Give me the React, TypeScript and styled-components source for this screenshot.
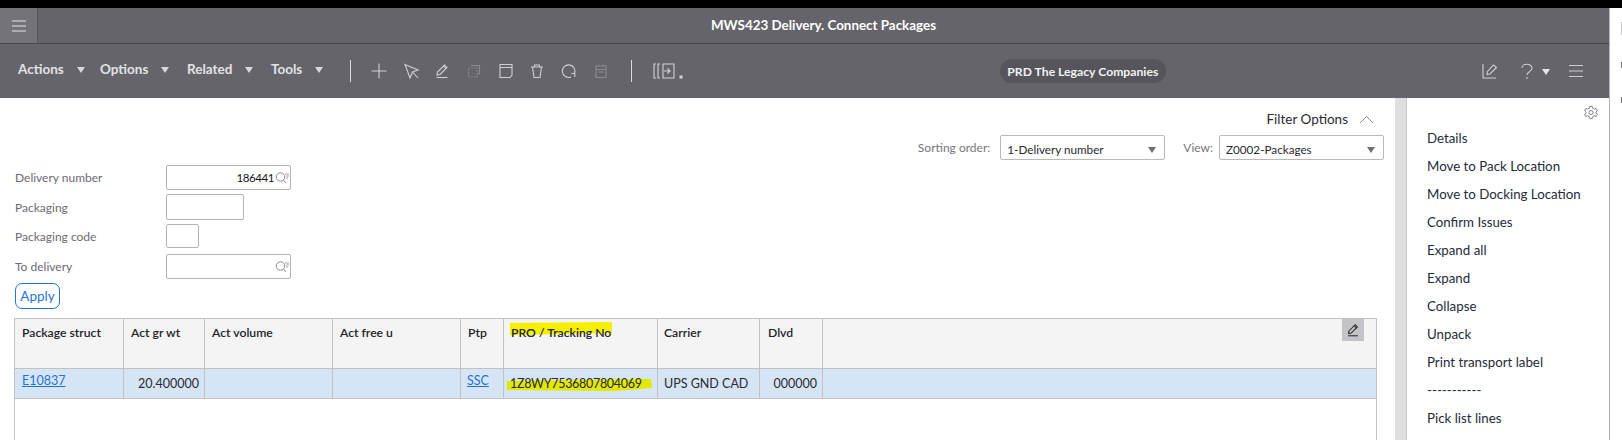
import React from "react";
import styled, { createGlobalStyle } from "styled-components";

const FONT = `Lato, "Noto Sans", "Liberation Sans", sans-serif`;

const GRID = "109px 81px 128px 128px 43px 154px 102px 63px 1fr";

const GlobalStyle = createGlobalStyle`
  html, body {
    margin: 0;
    padding: 0;
    background: #fff;
  }
  body {
    font-family: ${FONT};
    font-size: 13px;
    color: #2a2a30;
  }
`;

const Page = styled.div`
  width: 1622px;
  height: 440px;
  overflow: hidden;
  display: flex;
  flex-direction: column;
`;

const BlackEdge = styled.div`
  height: 8px;
  flex: none;
  background: #000;
`;

const Frame = styled.div`
  flex: 1;
  min-height: 0;
  display: flex;
`;

const Shell = styled.div`
  width: 1609px;
  flex: none;
  display: flex;
  flex-direction: column;
  border-right: 1px solid #b4b4b8;
`;

const NextWindow = styled.div`
  flex: 1;
  display: flex;
  flex-direction: column;
  align-items: flex-end;
`;

const NextWindowMark = styled.span<{ $top: number; $height: number; $color: string }>`
  width: 1px;
  height: ${p => p.$height}px;
  margin-top: ${p => p.$top}px;
  background: ${p => p.$color};
`;

const TitleBar = styled.header`
  height: 35px;
  flex: none;
  display: flex;
  align-items: stretch;
  background: #65646b;
  border-bottom: 1px solid #47474c;
`;

const MenuButton = styled.div`
  width: 37px;
  flex: none;
  display: flex;
  align-items: center;
  justify-content: center;
  background: #74737a;
  border-right: 1px solid #55555b;
`;

const Title = styled.h1`
  flex: 1;
  margin: 0;
  text-align: center;
  font-size: 13.4px;
  line-height: 35px;
  font-weight: 700;
  color: #fff;
`;

const Toolbar = styled.div`
  height: 54px;
  flex: none;
  display: flex;
  align-items: center;
  background: #65646b;
  padding-left: 18px;
`;

const MenuItem = styled.span<{ $width: number }>`
  width: ${p => p.$width}px;
  margin-bottom: 4px;
  display: flex;
  align-items: center;
  gap: 13px;
  font-size: 13.5px;
  font-weight: 700;
  color: #e2e2e6;
`;

const Caret = styled.span<{ $color?: string }>`
  width: 0;
  height: 0;
  flex: none;
  margin-top: 2px;
  border-left: 4.5px solid transparent;
  border-right: 4.5px solid transparent;
  border-top: 6px solid ${p => p.$color ?? "#d8d8dc"};
`;

const Separator = styled.span<{ $left: number; $right: number }>`
  width: 1px;
  height: 22px;
  flex: none;
  margin: 0 ${p => p.$right}px 0 ${p => p.$left}px;
  background: #d9d9dc;
`;

const IconGroup = styled.div`
  display: flex;
  align-items: center;
  gap: 13.7px;
`;

const ToolIcon = styled.svg<{ $dim?: boolean; $after?: number; $before?: number }>`
  width: 18px;
  height: 18px;
  flex: none;
  margin: 0 ${p => p.$after ?? 0}px 0 ${p => p.$before ?? 0}px;
  fill: none;
  stroke: ${p => (p.$dim ? "#8b8a91" : "#cfcfd3")};
  stroke-width: 1.1;
`;

const ToolDots = styled.svg`
  width: 30px;
  height: 18px;
  flex: none;
  fill: none;
  stroke: #d2d2d6;
  stroke-width: 1.1;
`;

const TenantPill = styled.div`
  margin-left: 317px;
  width: 166px;
  height: 24px;
  flex: none;
  display: flex;
  align-items: center;
  justify-content: center;
  border-radius: 12px;
  background: #56555b;
  font-size: 12.2px;
  font-weight: 700;
  color: #f2f2f4;
`;

const ToolbarRight = styled.div`
  margin-left: 315px;
  display: flex;
  align-items: center;
`;

const Body = styled.div`
  flex: 1;
  min-height: 0;
  display: flex;
`;

const Content = styled.main`
  width: 1395px;
  flex: none;
  display: flex;
  flex-direction: column;
  padding: 11px 18px 0 14px;
  box-sizing: border-box;
`;

const FilterToggle = styled.div`
  height: 20px;
  display: flex;
  justify-content: flex-end;
  align-items: center;
  gap: 11px;
  padding-right: 3px;
  font-size: 13.5px;
  color: #2a2a30;
`;

const SortRow = styled.div`
  margin: 6px -7px 0 0;
  height: 25px;
  display: flex;
  justify-content: flex-end;
  align-items: center;
`;

const SortLabel = styled.span<{ $gap: number; $lead?: number }>`
  margin: 0 ${p => p.$gap}px 0 ${p => p.$lead ?? 0}px;
  font-size: 12px;
  color: #77757d;
`;

const SelectBox = styled.div`
  width: 165px;
  height: 25px;
  box-sizing: border-box;
  display: flex;
  align-items: center;
  justify-content: space-between;
  padding: 2px 8px 0 6px;
  border: 1px solid #b8b8b8;
  border-radius: 2px;
  font-size: 11.7px;
  color: #2a2a30;
`;

const FilterForm = styled.div`
  margin-top: 5px;
  display: flex;
  flex-direction: column;
`;

const FieldRow = styled.div<{ $gap: number }>`
  display: flex;
  align-items: center;
  margin-bottom: ${p => p.$gap}px;
`;

const FieldLabel = styled.label`
  width: 152px;
  flex: none;
  padding-left: 1px;
  box-sizing: border-box;
  font-size: 12px;
  color: #6e6a74;
`;

const FieldInput = styled.div<{ $width: number; $height: number }>`
  width: ${p => p.$width}px;
  height: ${p => p.$height}px;
  box-sizing: border-box;
  display: flex;
  align-items: center;
  justify-content: flex-end;
  border: 1px solid #b4b4b4;
  border-radius: 2px;
  font-size: 11.5px;
  letter-spacing: -0.4px;
  color: #16161a;
`;

const SearchIcon = styled.svg`
  width: 14px;
  height: 14px;
  flex: none;
  margin: 0 1px 0 1px;
  fill: none;
  stroke: #8c8c8e;
  stroke-width: 1;
`;

const ApplyButton = styled.button`
  align-self: flex-start;
  margin: 0 0 9px 1px;
  width: 45px;
  height: 26px;
  padding: 0;
  background: #fff;
  border: 1px solid #1f74d8;
  border-radius: 7px;
  font-family: ${FONT};
  font-size: 13.5px;
  color: #1f74d8;
`;

const Table = styled.div`
  flex: 1;
  border: 1px solid #c2c2c2;
  border-bottom: 0;
`;

const TableRow = styled.div<{ $height: number; $bg: string }>`
  display: grid;
  grid-template-columns: ${GRID};
  height: ${p => p.$height}px;
  box-sizing: border-box;
  background: ${p => p.$bg};
  border-bottom: 1px solid #c2c2c2;
`;

const HeadCell = styled.div<{ $pad?: number }>`
  position: relative;
  padding: 5px 0 0 ${p => p.$pad ?? 7}px;
  border-right: 1px solid #c2c2c2;
  font-size: 12.2px;
  line-height: 18px;
  font-weight: 600;
  color: #23232a;

  &:last-child {
    border-right: 0;
  }
`;

const EditCell = styled(HeadCell)`
  display: flex;
  justify-content: flex-end;
  padding: 0 12px 0 0;
`;

const EditButton = styled.div`
  width: 22px;
  height: 22px;
  display: flex;
  align-items: center;
  justify-content: center;
  background: #c4c4c8;
`;

const BodyCell = styled.div<{ $align?: string; $pad?: number }>`
  position: relative;
  padding: 5px ${p => (p.$align === "right" ? (p.$pad ?? 5) : 0)}px 0
    ${p => (p.$align === "right" ? 0 : (p.$pad ?? 6))}px;
  border-right: 1px solid #c2c2c2;
  text-align: ${p => p.$align ?? "left"};
  font-size: 12.5px;
  line-height: 19px;
  color: #2a2a30;

  &:last-child {
    border-right: 0;
  }
`;

const CellLink = styled.a`
  display: block;
  margin-top: -3px;
  color: #1f74d8;
  text-decoration: underline;
`;

const CellText = styled.span<{ $tight?: boolean }>`
  position: relative;
  letter-spacing: ${p => (p.$tight ? "-0.3px" : "normal")};
`;

// marker strokes someone drew over the screenshot
const Highlight = styled.svg<{ $left: number; $top: number; $width: number; $height: number }>`
  position: absolute;
  left: ${p => p.$left}px;
  top: ${p => p.$top}px;
  width: ${p => p.$width}px;
  height: ${p => p.$height}px;
`;

const Scrollbar = styled.div`
  width: 12px;
  flex: none;
  background: #dfdfdf;
  border-right: 1px solid #c8c8c8;
  box-sizing: border-box;
`;

const SidePanel = styled.aside`
  flex: 1;
  display: flex;
  flex-direction: column;
  padding: 7px 0 0 20px;
`;

const GearRow = styled.div`
  height: 18px;
  display: flex;
  justify-content: flex-end;
  padding-right: 11px;
`;

const SideList = styled.ul`
  list-style: none;
  margin: 1px 0 0;
  padding: 0;
`;

const SideItem = styled.li`
  height: 28px;
  line-height: 28px;
  font-size: 13.3px;
  color: #1d2b3a;
`;

const Chevron = () => (
  <svg width="15" height="9" viewBox="0 0 15 9" fill="none" stroke="#8f8f93" strokeWidth="1">
    <path d="M1 8 L7.5 1.5 L14 8" />
  </svg>
);

const Search = () => (
  <SearchIcon viewBox="0 0 14 14">
    <circle cx="5.5" cy="6" r="4.2" />
    <path d="M8.5 9.2 L11 12" />
    <path d="M10 3 H14 M11 5 H14 M11 7 H13" strokeWidth="0.8" />
  </SearchIcon>
);

const Pencil = () => (
  <>
    <path d="M4 13 L4.5 10 L11.5 3 L14 5.5 L7 12.5 Z" />
    <path d="M10.3 4.2 L12.8 6.7" />
    <path d="M3.5 15.5 H14.5" />
  </>
);

const MENUS = [
  { label: "Actions", width: 82 },
  { label: "Options", width: 87 },
  { label: "Related", width: 84 },
  { label: "Tools", width: 79 }
];

const SIDE_ITEMS = [
  "Details",
  "Move to Pack Location",
  "Move to Docking Location",
  "Confirm Issues",
  "Expand all",
  "Expand",
  "Collapse",
  "Unpack",
  "Print transport label",
  "-----------",
  "Pick list lines"
];

export default function App() {
  return (
    <Page>
      <GlobalStyle />
      <BlackEdge />
      <Frame>
        <Shell>
          <TitleBar>
            <MenuButton>
              <svg width="14" height="12" viewBox="0 0 14 12" stroke="#e4e4e6" strokeWidth="1.1">
                <path d="M0 1 H14 M0 6 H14 M0 11 H14" />
              </svg>
            </MenuButton>
            <Title>MWS423 Delivery. Connect Packages</Title>
          </TitleBar>

          <Toolbar>
            {MENUS.map(m => (
              <MenuItem key={m.label} $width={m.width}>
                {m.label} <Caret />
              </MenuItem>
            ))}
            <Separator $left={0} $right={19} />
            <IconGroup>
              <ToolIcon viewBox="0 0 18 18">
                <path d="M9 1.5 V16.5 M1.5 9 H16.5" />
              </ToolIcon>
              <ToolIcon viewBox="0 0 18 18">
                <path d="M3 2.5 L16 8 L10.5 10 L8 16 Z M10.5 10 L16 16" />
              </ToolIcon>
              <ToolIcon viewBox="0 0 18 18">
                <Pencil />
              </ToolIcon>
              <ToolIcon viewBox="0 0 18 18" $dim>
                <path d="M6 3.5 H14.5 V12 H12" />
                <path d="M3.5 6 H12 V15 H3.5 Z" strokeDasharray="1.5 1.2" />
              </ToolIcon>
              <ToolIcon viewBox="0 0 18 18">
                <path d="M3 2.5 H15 V13 L13 15.5 H3 Z M3 5.5 H15" />
              </ToolIcon>
              <ToolIcon viewBox="0 0 18 18">
                <path d="M3 5 H15 M4.5 5 L6 15.5 H12 L13.5 5 M6.5 5 V3 H11.5 V5" />
              </ToolIcon>
              <ToolIcon viewBox="0 0 18 18">
                <path d="M11 15 A6.3 6.3 0 1 1 14.5 11.5 M14.8 15 V11.5 H11.5" />
              </ToolIcon>
              <ToolIcon viewBox="0 0 18 18" $dim>
                <path d="M4 4 H14 V15.5 H4 Z M4 7.5 H14 M6.5 2.5 V4 M11.5 2.5 V4 M6.5 10 H11.5" />
              </ToolIcon>
            </IconGroup>
            <Separator $left={21} $right={21} />
            <ToolDots viewBox="0 0 30 18">
              <path d="M3 2 H1 V16 H3 M7 2 H5 V16 H7" />
              <path d="M10 2 H21 V16 H10 Z" />
              <path d="M11 9 H17 M14.5 6.5 L17 9 L14.5 11.5" />
              <path d="M27 14 H29 V16 H27 Z" fill="#d2d2d6" />
            </ToolDots>

            <TenantPill>PRD The Legacy Companies</TenantPill>

            <ToolbarRight>
              <ToolIcon viewBox="0 0 18 18" $after={19}>
                <path d="M2 2 V16 H15" />
                <path d="M6 12.5 L6.5 9.5 L12.5 3 L15.5 5.5 L9 12 Z" />
              </ToolIcon>
              <ToolIcon viewBox="0 0 18 18" $after={6}>
                <path d="M4 6 C4 1 14 1 14 6 C14 10 9 9.5 9 13 M9 15 V17" />
              </ToolIcon>
              <Caret $color="#e6e6e8" />
              <ToolIcon viewBox="0 0 18 18" $before={17.5}>
                <path d="M2 3.5 H16 M2 9 H16 M2 14.5 H16" />
              </ToolIcon>
            </ToolbarRight>
          </Toolbar>

          <Body>
            <Content>
              <FilterToggle>
                Filter Options <Chevron />
              </FilterToggle>
              <SortRow>
                <SortLabel $gap={10}>Sorting order:</SortLabel>
                <SelectBox>
                  1-Delivery number <Caret $color="#6f6f73" />
                </SelectBox>
                <SortLabel $lead={18} $gap={6}>
                  View:
                </SortLabel>
                <SelectBox>
                  Z0002-Packages <Caret $color="#6f6f73" />
                </SelectBox>
              </SortRow>

              <FilterForm>
                <FieldRow $gap={4}>
                  <FieldLabel>Delivery number</FieldLabel>
                  <FieldInput $width={125} $height={25}>
                    186441
                    <Search />
                  </FieldInput>
                </FieldRow>
                <FieldRow $gap={4}>
                  <FieldLabel>Packaging</FieldLabel>
                  <FieldInput $width={78} $height={26} />
                </FieldRow>
                <FieldRow $gap={6}>
                  <FieldLabel>Packaging code</FieldLabel>
                  <FieldInput $width={33} $height={24} />
                </FieldRow>
                <FieldRow $gap={4}>
                  <FieldLabel>To delivery</FieldLabel>
                  <FieldInput $width={125} $height={25}>
                    <Search />
                  </FieldInput>
                </FieldRow>
                <ApplyButton>Apply</ApplyButton>
              </FilterForm>

              <Table>
                <TableRow $height={50} $bg="#f4f4f4">
                  <HeadCell>Package struct</HeadCell>
                  <HeadCell>Act gr wt</HeadCell>
                  <HeadCell>Act volume</HeadCell>
                  <HeadCell>Act free u</HeadCell>
                  <HeadCell>Ptp</HeadCell>
                  <HeadCell $pad={7}>
                    <Highlight $left={5} $top={3} $width={104} $height={13} viewBox="0 0 104 13">
                      <path d="M1 1 L103 0 L103 11 L60 12 L1 13 Z" fill="#f6f000" />
                    </Highlight>
                    <CellText>PRO / Tracking No</CellText>
                  </HeadCell>
                  <HeadCell $pad={6}>Carrier</HeadCell>
                  <HeadCell $pad={8}>Dlvd</HeadCell>
                  <EditCell>
                    <EditButton>
                      <svg width="16" height="16" viewBox="0 0 18 18" fill="none" stroke="#2b2b30" strokeWidth="1.2">
                        <Pencil />
                      </svg>
                    </EditButton>
                  </EditCell>
                </TableRow>
                <TableRow $height={30} $bg="#d6e5f6">
                  <BodyCell $pad={7}>
                    <CellLink>E10837</CellLink>
                  </BodyCell>
                  <BodyCell $align="right">20.400000</BodyCell>
                  <BodyCell />
                  <BodyCell />
                  <BodyCell>
                    <CellLink>SSC</CellLink>
                  </BodyCell>
                  <BodyCell $pad={6}>
                    <Highlight $left={1} $top={9} $width={148} $height={14} viewBox="0 0 148 14">
                      <path d="M2 3 L146 1 L147 10 L110 13 L2 12 Z" fill="#e2e800" />
                    </Highlight>
                    <CellText $tight>1Z8WY7536807804069</CellText>
                  </BodyCell>
                  <BodyCell $pad={6}>UPS GND CAD</BodyCell>
                  <BodyCell $align="right">000000</BodyCell>
                  <BodyCell />
                </TableRow>
              </Table>
            </Content>

            <Scrollbar />

            <SidePanel>
              <GearRow>
                <svg width="14" height="15" viewBox="0 0 24 24" fill="none" stroke="#77777b" strokeWidth="1.6">
                  <circle cx="12" cy="12" r="3.5" />
                  <path d="M10 1.5 H14 L14.8 4.8 L17.6 6.2 L21 5.2 L23 8.8 L20.5 11 V13 L23 15.2 L21 18.8 L17.6 17.8 L14.8 19.2 L14 22.5 H10 L9.2 19.2 L6.4 17.8 L3 18.8 L1 15.2 L3.5 13 V11 L1 8.8 L3 5.2 L6.4 6.2 L9.2 4.8 Z" />
                </svg>
              </GearRow>
              <SideList>
                {SIDE_ITEMS.map(item => (
                  <SideItem key={item}>{item}</SideItem>
                ))}
              </SideList>
            </SidePanel>
          </Body>
        </Shell>
        <NextWindow>
          <NextWindowMark $top={14} $height={13} $color="#c4c4c4" />
          <NextWindowMark $top={27} $height={6} $color="#77777d" />
          <NextWindowMark $top={29} $height={6} $color="#77777d" />
        </NextWindow>
      </Frame>
    </Page>
  );
}
